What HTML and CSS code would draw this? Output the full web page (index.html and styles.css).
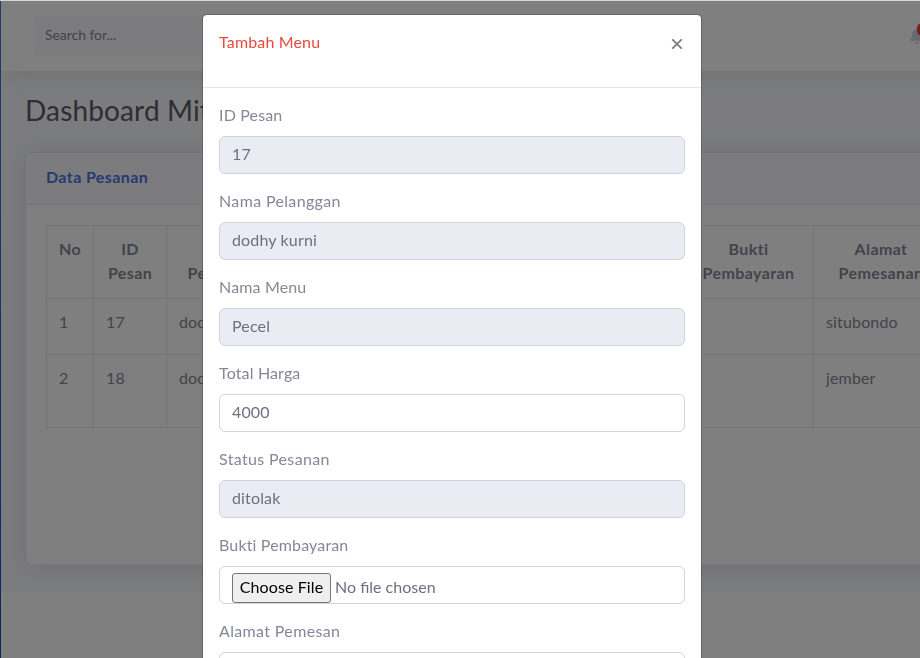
FILE: index.html
```html
<!DOCTYPE html>
<html lang="id">
<head>
<meta charset="utf-8">
<title>Dashboard Mitra</title>
<link rel="stylesheet" href="styles.css">
</head>
<body>
<div class="page">
  <aside class="sidebar"></aside>
  <div class="wrapper">
    <div class="content">
      <nav class="topbar">
        <div class="search">Search for...</div>
        <div class="alerts">
          <svg class="bell" viewBox="0 0 448 512"><path d="M224 512c35.300 0 63.900-28.700 63.900-64H160.100c0 35.300 28.600 64 63.900 64zM439.400 362.300c-19.300-20.800-55.500-52-55.500-154.300 0-77.700-54.500-139.900-127.900-155.200V32c0-17.700-14.300-32-32-32s-32 14.300-32 32v20.800C118.600 68.100 64.100 130.300 64.100 208c0 102.300-36.200 133.500-55.500 154.300C2.600 368.700 0 376.400 0 384c.1 16.400 13 32 32.100 32h383.800c19.100 0 32-15.600 32.100-32 0-7.600-2.700-15.300-8.600-21.700z"/></svg>
          <span class="badge">3+</span>
        </div>
      </nav>
      <main class="container">
        <h1 class="heading">Dashboard Mitra</h1>
        <section class="card">
          <h6 class="card-header">Data Pesanan</h6>
          <div class="card-body">
            <table class="table">
              <colgroup><col class="c-no"><col class="c-id"><col class="c-name"><col class="c-menu"><col class="c-total"><col class="c-status"><col class="c-proof"><col class="c-address"></colgroup>
              <thead>
                <tr><th>No</th><th>ID Pesan</th><th>Nama Pelanggan</th><th>Nama Menu</th><th>Total Harga</th><th>Status Pesanan</th><th>Bukti Pembayaran</th><th>Alamat Pemesanan</th></tr>
              </thead>
              <tbody>
                <tr class="row-first"><td>1</td><td>17</td><td>dodhy kurni</td><td>Pecel</td><td>4000</td><td>ditolak</td><td></td><td>situbondo</td></tr>
                <tr class="row-second"><td>2</td><td>18</td><td>dodhy kurni</td><td>Pecel</td><td>4000</td><td>ditolak</td><td></td><td>jember</td></tr>
              </tbody>
            </table>
          </div>
        </section>
      </main>
    </div>
  </div>
</div>
<div class="backdrop">
  <div class="modal">
    <header class="modal-header">
      <h5 class="modal-title">Tambah Menu</h5>
      <svg class="close" viewBox="0 0 12 12"><path d="M1.300 1.300l9.400 9.400M10.700 1.300l-9.400 9.400"/></svg>
    </header>
    <div class="modal-body">
      <div class="group"><div class="label">ID Pesan</div><div class="control readonly">17</div></div>
      <div class="group"><div class="label wide">Nama Pelanggan</div><div class="control readonly">dodhy kurni</div></div>
      <div class="group"><div class="label">Nama Menu</div><div class="control readonly">Pecel</div></div>
      <div class="group"><div class="label">Total Harga</div><div class="control">4000</div></div>
      <div class="group"><div class="label wide">Status Pesanan</div><div class="control readonly">ditolak</div></div>
      <div class="group"><div class="label">Bukti Pembayaran</div><div class="control file"><span class="choose">Choose File</span><span class="chosen">No file chosen</span></div></div>
      <div class="group"><div class="label wide">Alamat Pemesan</div><div class="control"></div></div>
    </div>
  </div>
</div>
</body>
</html>
```
FILE: styles.css
```css
* { box-sizing: border-box; }
html, body { height: 100%; overflow: hidden; }
body {
  margin: 0;
  border-top: 1px solid #d5d8da;
  background: #fff;
  color: #858796;
  font: 400 16px/24px Lato, "Open Sans", sans-serif;
  letter-spacing: 0.15px;
}
h1, h5, h6 { margin: 0; }
.page { display: flex; height: 100%; overflow: hidden; }
.sidebar { flex: 0 0 1px; background: linear-gradient(#4e73df, #224abe); }
.wrapper { flex: 0 0 1160px; }
.content { height: 591px; background: #f8f9fc; overflow: hidden; }
.topbar {
  display: flex;
  align-items: center;
  height: 70px;
  padding: 0 233px 0 33px;
  background: #fff;
  box-shadow: 0 2px 28px rgba(58, 59, 69, .15);
}
.search {
  width: 400px;
  height: 38px;
  padding: 6px 11px;
  border-radius: 6px;
  background: #f8f9fc;
  font-size: 14px;
  letter-spacing: -0.05px;
}
.alerts { position: relative; margin-left: auto; width: 18px; height: 16px; }
.bell { display: block; width: 14px; height: 16px; fill: #d1d3e2; }
.badge {
  position: absolute;
  top: -5px;
  left: 7px;
  padding: 3px 4px;
  border-radius: 5px;
  background: #e74a3b;
  color: #fff;
  font: 700 9px/7px Lato, sans-serif;
}
.container { padding: 24px 24px 0; }
.heading {
  margin-bottom: 26px;
  color: #5a5c69;
  font-size: 28px;
  font-weight: 400;
  line-height: 31px;
}
.card {
  height: 413px;
  border: 1px solid #e3e6f0;
  border-bottom-color: #f4f5f9;
  border-radius: 6px;
  background: #fff;
  box-shadow: 0 2px 28px rgba(58, 59, 69, .15);
}
.card-header {
  height: 52px;
  padding: 14px 20px;
  border-bottom: 1px solid #e3e6f0;
  border-radius: 5px 5px 0 0;
  background: #f8f9fc;
  color: #4e73df;
  font-size: 16px;
  line-height: 20px;
  letter-spacing: 0.4px;
}
.card-body { padding: 20px; }
.table { width: 902px; table-layout: fixed; border-collapse: collapse; }
.table th, .table td { border: 1px solid #e3e6f0; padding: 11px 12px 12px; vertical-align: top; }
.table th { height: 73px; text-align: center; letter-spacing: 0.4px; }
.c-no { width: 47px; }
.c-id { width: 73px; }
.c-name { width: 119px; }
.c-menu { width: 122px; }
.c-total { width: 130px; }
.c-status { width: 146px; }
.c-proof { width: 130px; }
.c-address { width: 135px; }
.row-first { height: 56px; }
.row-second { height: 73px; }
.backdrop {
  position: fixed;
  inset: 1px 0 0;
  display: flex;
  justify-content: center;
  align-items: flex-start;
  padding: 13px 16px 0 0;
  background: rgba(0, 0, 0, .5);
  overflow: hidden;
}
.modal {
  width: 500px;
  border: 1px solid rgba(0, 0, 0, .2);
  border-radius: 5px;
  background: #fff;
  background-clip: padding-box;
}
.modal-header {
  display: flex;
  justify-content: space-between;
  height: 73px;
  padding: 15px 16px;
  border-bottom: 1px solid #e3e6f0;
}
.modal-title { color: #e74a3b; font-size: 16px; font-weight: 400; }
.close { width: 12px; height: 12px; margin: 8px 2px 0 0; fill: none; stroke: #808080; stroke-width: 1.9; }
.modal-body { padding: 15px 16px; }
.group { margin-bottom: 15px; }
.label { margin-bottom: 9px; }
.wide { letter-spacing: 0.35px; }
.control {
  height: 38px;
  padding: 5px 12px;
  border: 1px solid #d1d3e2;
  border-radius: 6px;
  background: #fff;
  color: #6e707e;
}
.readonly { background: #eaecf4; }
.file { display: flex; gap: 4px; padding-top: 6px; overflow: hidden; line-height: 28px; letter-spacing: 0; }
.choose {
  width: 99px;
  height: 30px;
  border: 1px solid #767676;
  border-radius: 3px;
  background: #efefef;
  color: #000;
  line-height: 26px;
  letter-spacing: 0.1px;
  text-align: center;
}
```
